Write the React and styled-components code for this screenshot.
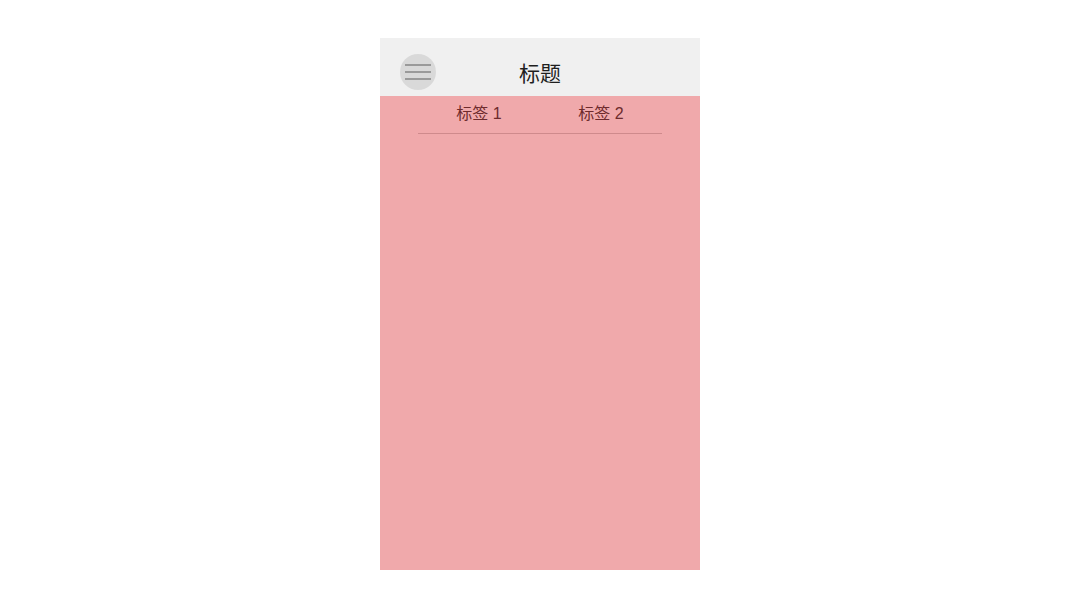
import React from 'react';
import styled, { createGlobalStyle } from 'styled-components';

const GlobalStyle = createGlobalStyle`
  html, body {
    margin: 0;
    padding: 0;
    background: #fff;
  }
  body {
    font-family: "Liberation Sans", "Noto Sans CJK SC", sans-serif;
  }
`;

const Page = styled.div`
  width: 1080px;
  height: 608px;
  display: flex;
  justify-content: center;
  padding-top: 38px;
  box-sizing: border-box;
`;

const Phone = styled.div`
  width: 320px;
  height: 532px;
  display: flex;
  flex-direction: column;
  background: #f0a9ab;
`;

const Header = styled.div`
  height: 58px;
  flex-shrink: 0;
  box-sizing: border-box;
  padding-top: 10px;
  background: #f0f0f0;
  display: grid;
  grid-template-columns: 60px 1fr 60px;
  align-items: center;
`;

const MenuButton = styled.div`
  width: 36px;
  height: 36px;
  margin-left: 20px;
  border-radius: 50%;
  background: #d9d9d9;
  display: flex;
  flex-direction: column;
  justify-content: center;
  align-items: center;
  gap: 5px;
`;

const MenuLine = styled.span`
  width: 26px;
  height: 2px;
  background: #9a9a9a;
`;

const Title = styled.h1`
  margin: 0;
  text-align: center;
  font-size: 21px;
  font-weight: 400;
  color: #1e1e1e;
`;

const Tabs = styled.div`
  margin: 0 38px;
  display: grid;
  grid-template-columns: 1fr 1fr;
  border-bottom: 1px solid #cf8a8c;
`;

const Tab = styled.div`
  height: 37px;
  box-sizing: border-box;
  padding-bottom: 5px;
  display: flex;
  align-items: center;
  justify-content: center;
  font-size: 16px;
  color: #6e2b2d;
`;

export default function App() {
  return (
    <>
      <GlobalStyle />
      <Page>
        <Phone>
          <Header>
            <MenuButton>
              <MenuLine />
              <MenuLine />
              <MenuLine />
            </MenuButton>
            <Title>标题</Title>
            <span />
          </Header>
          <Tabs>
            <Tab>标签 1</Tab>
            <Tab>标签 2</Tab>
          </Tabs>
        </Phone>
      </Page>
    </>
  );
}
